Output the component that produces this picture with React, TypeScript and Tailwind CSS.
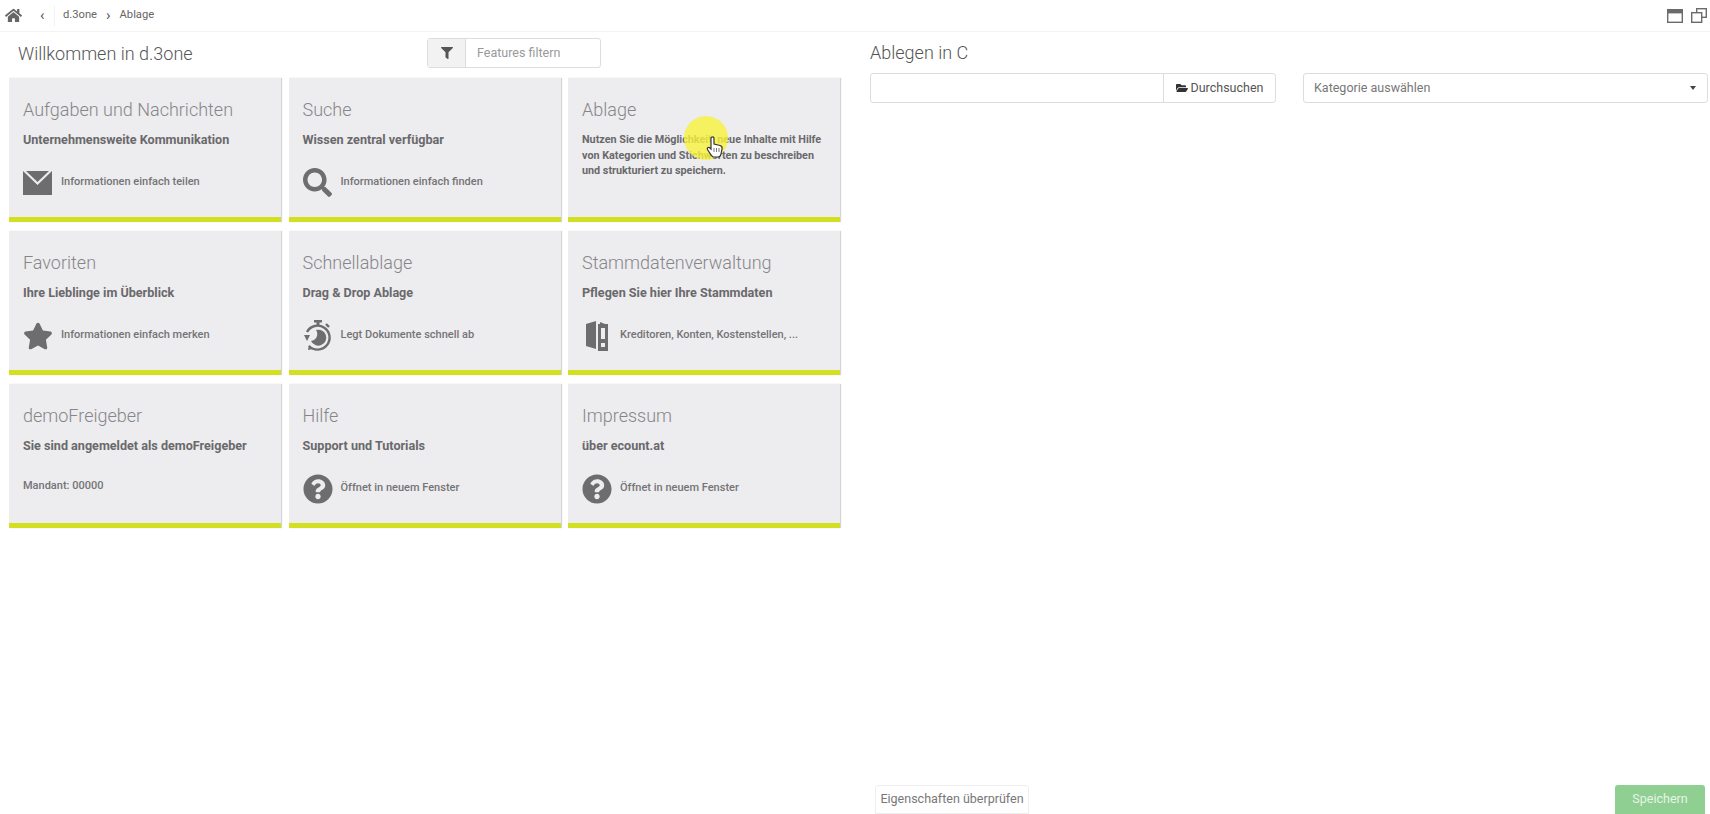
// App.tsx
import type { ReactNode } from 'react'
import { FaHome, FaFilter, FaFolderOpen, FaSearch, FaStar, FaQuestionCircle } from 'react-icons/fa'

const MailIcon = () => (
  <svg width="29" height="24" viewBox="0 0 29 24">
    <path d="M0 0 L14.5 14 L29 0 V24 H0 Z" fill="#6d6d70" />
    <path d="M3 0 H26 L14.5 11 Z" fill="#6d6d70" />
  </svg>
)

const TimerIcon = () => (
  <svg width="29" height="32" viewBox="0 0 29 32" fill="none">
    <rect x="11" y="0" width="8" height="2.5" fill="#6d6d70" />
    <rect x="13.5" y="2" width="3" height="4" fill="#6d6d70" />
    <path d="M23 4 l3 3" stroke="#6d6d70" strokeWidth="2.4" />
    <path d="M4 12 A12 12 0 1 1 6 26" stroke="#6d6d70" strokeWidth="2.4" />
    <path d="M1 15 h6 l-3 6 z M6 25 l4 4 -5 1 z" fill="#6d6d70" />
    <path d="M13 10 A8 8 0 1 1 8 21 A7 7 0 0 0 13 10 Z" fill="#6d6d70" />
  </svg>
)

const BinderIcon = () => (
  <svg width="22" height="30" viewBox="0 0 22 30">
    <path d="M0 3 L10 0 V28 L0 25 Z" fill="#6d6d70" />
    <path d="M12 3 H14 V1 L19 3 H22 V30 H12 Z" fill="#6d6d70" />
    <rect x="15" y="7" width="4" height="11" fill="#edecee" />
    <rect x="15" y="22" width="4" height="4" fill="#edecee" />
  </svg>
)

const cards: { title: string; sub: string; note?: string; icon?: ReactNode; wide?: boolean }[] = [
  { title: 'Aufgaben und Nachrichten', sub: 'Unternehmensweite Kommunikation', note: 'Informationen einfach teilen', icon: <MailIcon /> },
  { title: 'Suche', sub: 'Wissen zentral verfügbar', note: 'Informationen einfach finden', icon: <FaSearch size={29} color="#6d6d70" /> },
  { title: 'Ablage', sub: 'Nutzen Sie die Möglichkeit, neue Inhalte mit Hilfe von Kategorien und Stichwörten zu beschreiben und strukturiert zu speichern.' },
  { title: 'Favoriten', sub: 'Ihre Lieblinge im Überblick', note: 'Informationen einfach merken', icon: <FaStar size={30} color="#6d6d70" /> },
  { title: 'Schnellablage', sub: 'Drag & Drop Ablage', note: 'Legt Dokumente schnell ab', icon: <TimerIcon /> },
  { title: 'Stammdatenverwaltung', sub: 'Pflegen Sie hier Ihre Stammdaten', note: 'Kreditoren, Konten, Kostenstellen, ...', icon: <BinderIcon />, wide: true },
  { title: 'demoFreigeber', sub: 'Sie sind angemeldet als demoFreigeber', note: 'Mandant: 00000' },
  { title: 'Hilfe', sub: 'Support und Tutorials', note: 'Öffnet in neuem Fenster', icon: <FaQuestionCircle size={30} color="#6d6d70" /> },
  { title: 'Impressum', sub: 'über ecount.at', note: 'Öffnet in neuem Fenster', icon: <FaQuestionCircle size={30} color="#6d6d70" /> },
]

function Card({ title, sub, note, icon, wide }: (typeof cards)[number]) {
  return (
    <div className="h-[144px] bg-[#edecee] border-b-[5px] border-[#d2e021] px-[14px] pt-[20px] shadow-[1px_0_1px_#d5d5d5]">
      <h3 className="text-[18px] leading-[24px] font-light text-[#86868a]">{title}</h3>
      {/* the long Ablage text is set smaller than the one-line subtitles */}
      <p className={`mt-[10px] leading-[15.7px] font-bold text-[#69696c] ${note ? 'text-[12.6px]' : 'text-[10.8px]'}`}>{sub}</p>
      {note && (
        <div className={`${icon ? 'mt-[20px]' : 'mt-[18px]'} h-[30px] flex items-center`}>
          {icon && (
            <div className={`${wide ? 'w-[38px] pl-[4px]' : 'w-[38px]'} shrink-0 flex items-center`}>{icon}</div>
          )}
          <span className="text-[11px] font-medium text-[#747477]">{note}</span>
        </div>
      )}
    </div>
  )
}

export default function App() {
  return (
    <div className="relative h-[814px] flex flex-col overflow-hidden bg-white font-['Roboto',sans-serif]">
      {/* top bar */}
      <header className="h-[32px] shrink-0 flex items-center border-b border-[#f3f3f3] text-[11.2px] text-[#666]">
        <FaHome size={17} color="#66666a" className="ml-[5px]" />
        <span className="ml-[18px] w-[14px] text-[#555] text-[15px] leading-none">‹</span>
        <div className="h-[22px] border-l border-[#f3f3f3]" />
        <span className="ml-[8px]">d.3one</span>
        <span className="mx-[9px] text-[15px] leading-none text-[#555]">›</span>
        <span>Ablage</span>
        <div className="ml-auto mr-[3px] flex items-center gap-[8px]">
          <svg width="16" height="14" viewBox="0 0 16 14" fill="none" stroke="#6b6b6b" strokeWidth="1.4">
            <rect x="0.7" y="0.7" width="14.6" height="12.6" />
            <rect x="0.7" y="0.7" width="14.6" height="3" fill="#6b6b6b" />
          </svg>
          <svg width="16" height="15" viewBox="0 0 16 15" fill="none" stroke="#6b6b6b" strokeWidth="1.4">
            <rect x="5.7" y="0.7" width="9.6" height="8.6" />
            <rect x="0.7" y="4.7" width="10" height="9.6" fill="#fff" />
          </svg>
        </div>
      </header>

      <main className="flex-1 flex min-h-0">
        {/* feature tiles */}
        <section className="w-[870px] shrink-0 pl-[9px]">
          <div className="h-[46px] flex items-center pb-[4px]">
            <h1 className="ml-[9px] w-[409px] text-[18px] font-light text-[#555]">Willkommen in d.3one</h1>
            <div className="w-[174px] h-[30px] flex border border-[#ddd] rounded-[3px] text-[12.5px]">
              <div className="w-[38px] bg-[#f2f2f2] border-r border-[#ddd] flex items-center justify-center">
                <FaFilter size={12} color="#555" />
              </div>
              <span className="pl-[11px] self-center text-[#999]">Features filtern</span>
            </div>
          </div>
          <div className="grid grid-cols-[repeat(3,272px)] gap-x-[7.5px] gap-y-[9px]">
            {cards.map(c => (
              <Card key={c.title} {...c} />
            ))}
          </div>
        </section>

        {/* upload form */}
        <section className="flex-1 flex flex-col">
          <h2 className="h-[41px] pt-[9px] text-[18px] leading-[24px] font-light text-[#555]">Ablegen in C</h2>
          <div className="flex h-[30px] text-[12.5px] text-[#777]">
            <div className="w-[406px] flex border border-[#ddd] rounded-[3px]">
              <div className="flex-1" />
              <div className="w-[112px] border-l border-[#ddd] flex items-center justify-center gap-[3px] text-[#555]">
                <FaFolderOpen size={12} color="#333" />
                Durchsuchen
              </div>
            </div>
            <div className="ml-[27px] w-[405px] flex items-center justify-between border border-[#ddd] rounded-[3px] pl-[10px] pr-[11px]">
              <span className="pt-[1px]">Kategorie auswählen</span>
              <span className="w-0 h-0 border-x-[3px] border-x-transparent border-t-[4px] border-t-[#444]" />
            </div>
          </div>
          <div className="mt-auto ml-[5px] mr-[5px] flex justify-between text-[12.5px]">
            <button className="h-[29px] w-[154px] border border-[#eee] rounded-t-[3px] text-[#777]">Eigenschaften überprüfen</button>
            <button className="h-[29px] w-[90px] bg-[#8fcf92] rounded-t-[3px] text-[#e6f5e6]">Speichern</button>
          </div>
        </section>
      </main>

      {/* recorded mouse pointer */}
      <div className="absolute left-[684px] top-[116px] w-[44px] h-[44px] rounded-full bg-[#f7f23a]/80" />
      <svg className="absolute left-[706px] top-[136px]" width="18" height="22" viewBox="0 0 18 22">
        <path
          d="M5 2 C5 0.6 8 0.6 8 2 V8 L14 9.5 C16 10 16.5 11 16 13 L15 18 C14.7 20 14 21 12 21 H8 C6.5 21 6 20 5 19 L1.5 13.5 C0.5 12 2.5 10.5 4 12 L5 13 Z"
          fill="#fff"
          stroke="#333"
          strokeWidth="1.2"
        />
        <path d="M8 12 V16 M10.5 12 V16 M13 12 V16" stroke="#555" strokeWidth="0.8" />
      </svg>
    </div>
  )
}
